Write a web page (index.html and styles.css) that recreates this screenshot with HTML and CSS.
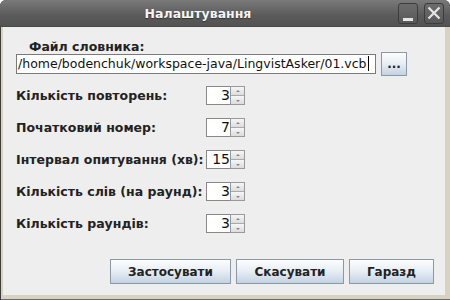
FILE: index.html
```html
<!DOCTYPE html>
<html>
<head>
    <title>Налаштування</title>
    <meta charset="utf-8">
    <link rel="stylesheet" href="styles.css">
</head>
<body>
    <div class="window">
        <div class="titlebar">
            <span class="title">Налаштування</span>
            <div class="wm-buttons">
                <span class="wm-btn">
                    <svg width="20" height="21" viewBox="0 0 20 21"><rect x="5" y="15" width="10" height="3" fill="#e6e6e6"/></svg>
                </span>
                <span class="wm-btn">
                    <svg width="20" height="21" viewBox="0 0 20 21"><path d="M4.5 4.5 L15.5 15.5 M15.5 4.5 L4.5 15.5" stroke="#e6e6e6" stroke-width="2.2" fill="none"/></svg>
                </span>
            </div>
        </div>
        <div class="frame">
            <div class="content">
                <div class="file-label">Файл словника:</div>
                <div class="file-row">
                    <div class="text-field">/home/bodenchuk/workspace-java/LingvistAsker/01.vcb<span class="caret"></span></div>
                    <button class="btn browse">...</button>
                </div>
                <div class="settings">
                    <div class="label">Кількість повторень:</div>
                    <div class="spinner"><span class="value">3</span><span class="arrows"><span class="up"></span><span class="down"></span></span></div>
                    <div class="label">Початковий номер:</div>
                    <div class="spinner"><span class="value">7</span><span class="arrows"><span class="up"></span><span class="down"></span></span></div>
                    <div class="label">Інтервал опитування (хв):</div>
                    <div class="spinner"><span class="value">15</span><span class="arrows"><span class="up"></span><span class="down"></span></span></div>
                    <div class="label">Кількість слів (на раунд):</div>
                    <div class="spinner"><span class="value">3</span><span class="arrows"><span class="up"></span><span class="down"></span></span></div>
                    <div class="label">Кількість раундів:</div>
                    <div class="spinner"><span class="value">3</span><span class="arrows"><span class="up"></span><span class="down"></span></span></div>
                </div>
                <div class="actions">
                    <button class="btn apply">Застосувати</button>
                    <button class="btn cancel">Скасувати</button>
                    <button class="btn ok">Гаразд</button>
                </div>
            </div>
        </div>
    </div>
</body>
</html>
```

FILE: styles.css
```css
body {
    margin: 0;
    width: 450px;
    height: 300px;
    overflow: hidden;
    background-color: #ffffff;
    font-family: "DejaVu Sans", sans-serif;
}
.window {
    width: 450px;
    height: 300px;
    box-sizing: border-box;
    display: flex;
    flex-direction: column;
    background-color: #3e3e3e;
    border-radius: 6px 6px 0 0;
    overflow: hidden;
}
.titlebar {
    height: 27px;
    flex-shrink: 0;
    display: flex;
    align-items: center;
    justify-content: center;
    position: relative;
    background: linear-gradient(#7a7a7a, #5a5a5a 60%, #535353);
    border-bottom: 1px solid #4a4a4a;
    box-sizing: border-box;
}
.title {
    color: #f4f4f4;
    font-weight: bold;
    font-size: 12.5px;
    margin-left: -54px;
    text-shadow: 0 1px 1px #333;
}
.wm-buttons {
    position: absolute;
    right: 6px;
    top: 3px;
    display: flex;
    gap: 6px;
}
.wm-btn {
    width: 20px;
    height: 21px;
    box-sizing: border-box;
    border: 1px solid #3c3c3c;
    border-radius: 3px;
    background: linear-gradient(#6c6c6c, #585858);
    display: flex;
}
.wm-btn svg {
    margin: -1px;
}
.frame {
    flex: 1;
    min-height: 0;
    display: flex;
    padding: 0 5px 4px 2px;
    margin-left: 1px;
    background-color: #d8d2c3;
    border-bottom: 1px solid #6a6a6a;
}
.content {
    flex: 1;
    background-color: #eeeeee;
    padding: 13px 11px 0 13px;
}
.file-label {
    font-weight: bold;
    font-size: 12.5px;
    color: #222;
    line-height: 14px;
    padding-left: 13px;
}
.file-row {
    display: flex;
    align-items: center;
    gap: 5px;
    margin-top: -2px;
}
.text-field {
    width: 360px;
    height: 20px;
    box-sizing: border-box;
    border: 1px solid #7a7a7a;
    background: #fff;
    font-size: 12.5px;
    line-height: 18px;
    padding-left: 1px;
    color: #111;
    white-space: nowrap;
    overflow: hidden;
}
.caret {
    display: inline-block;
    width: 1px;
    height: 15px;
    background: #000;
    vertical-align: -3px;
    margin-left: 1px;
}
.btn {
    font-family: "DejaVu Sans", sans-serif;
    font-weight: bold;
    font-size: 12px;
    color: #222;
    border: 1px solid #8b98a6;
    background: linear-gradient(#fdfdfe, #e6edf4 50%, #c3d2e2);
    padding: 0;
    box-sizing: border-box;
}
.browse {
    width: 26px;
    height: 24px;
}
.settings {
    display: grid;
    grid-template-columns: 190px 39px;
    row-gap: 13px;
    margin-top: 10px;
    align-items: center;
}
.label {
    font-weight: bold;
    font-size: 12.5px;
    color: #222;
    white-space: nowrap;
}
.spinner {
    display: flex;
    height: 19px;
}
.value {
    width: 24px;
    box-sizing: border-box;
    border: 1px solid #888;
    border-right: none;
    background: #fff;
    text-align: right;
    font-size: 14px;
    line-height: 17px;
    color: #111;
}
.arrows {
    width: 15px;
    display: flex;
    flex-direction: column;
    box-sizing: border-box;
    border: 1px solid #999;
}
.arrows span {
    flex: 1;
    background: linear-gradient(#f6f6f6, #dcdcdc);
    position: relative;
}
.arrows .up {
    border-bottom: 1px solid #aaa;
}
.arrows span::after {
    content: "";
    position: absolute;
    left: 5px;
    top: 3px;
    border-left: 2px solid transparent;
    border-right: 2px solid transparent;
}
.arrows .up::after {
    border-bottom: 2px solid #888;
}
.arrows .down::after {
    top: 4px;
    border-top: 2px solid #888;
}
.actions {
    display: flex;
    justify-content: flex-end;
    gap: 5px;
    margin-top: 26px;
}
.actions .btn {
    height: 25px;
}
.apply {
    width: 121px;
}
.cancel {
    width: 108px;
}
.ok {
    width: 85px;
}
```
